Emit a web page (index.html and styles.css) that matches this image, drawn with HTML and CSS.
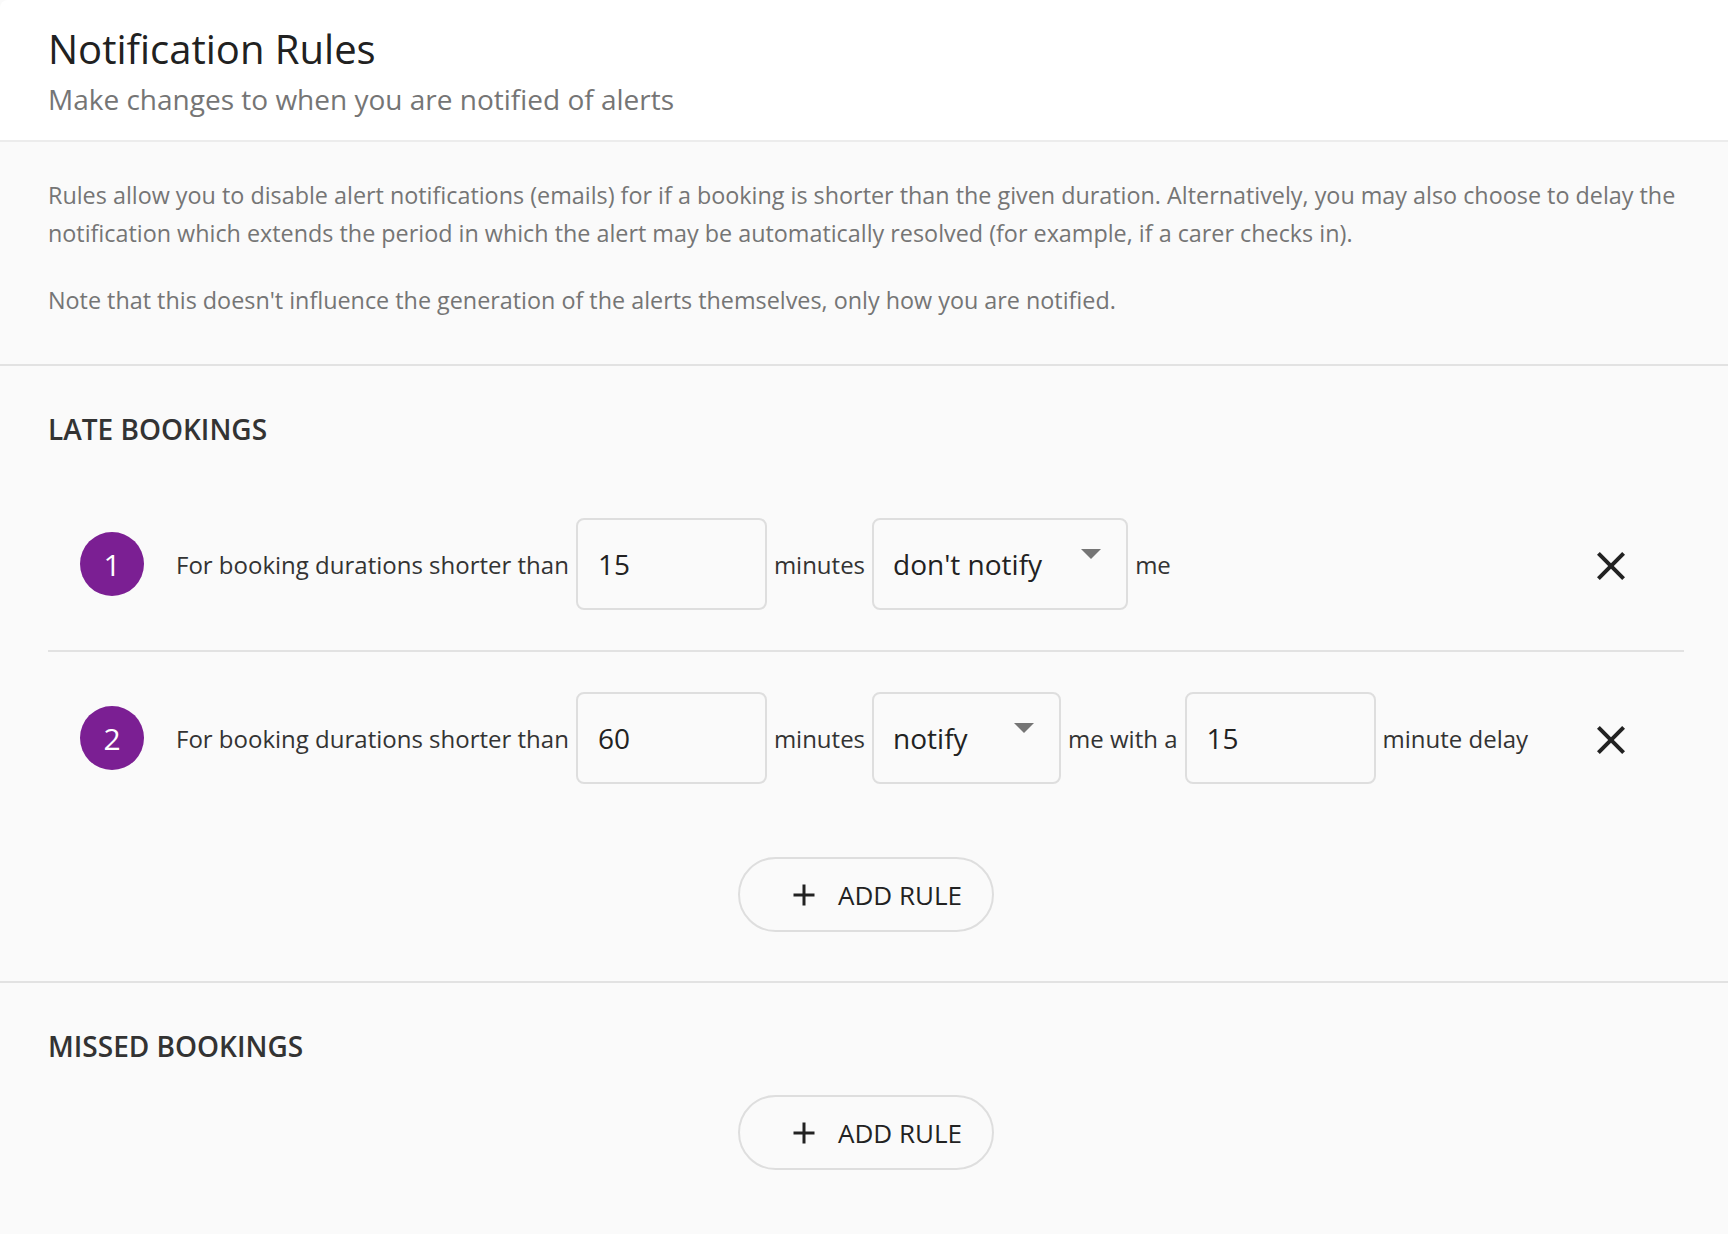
FILE: index.html
```html
<!DOCTYPE html>
<html lang="en">
  <head>
    <meta charset="UTF-8" />
    <meta name="viewport" content="width=device-width, initial-scale=1.0" />
    <title>Notification Rules</title>
    <link rel="stylesheet" href="styles.css">
  </head>
  <body>
    <div class="card">
      <div class="page-header">
        <h1 class="page-title">Notification Rules</h1>
        <p class="page-subtitle">Make changes to when you are notified of alerts</p>
      </div>

      <div class="intro">
        <p>Rules allow you to disable alert notifications (emails) for if a booking is shorter than the given duration. Alternatively, you may also choose to delay the notification which extends the period in which the alert may be automatically resolved (for example, if a carer checks in).</p>
        <p>Note that this doesn't influence the generation of the alerts themselves, only how you are notified.</p>
      </div>

      <div class="section">
        <h2 class="section-title">Late Bookings</h2>

        <div class="rules">
          <div class="rule">
            <div class="rule-number">1</div>
            <span class="rule-text">For booking durations shorter than</span>
            <input class="rule-input" type="text" value="15" />
            <span class="rule-text">minutes</span>
            <div class="rule-select"><span>don't notify</span></div>
            <span class="rule-text">me</span>
            <button class="remove-btn" title="Remove rule">
              <svg viewBox="0 0 24 24" width="48" height="48"><path d="M19 6.41L17.59 5 12 10.59 6.41 5 5 6.41 10.59 12 5 17.59 6.41 19 12 13.41 17.59 19 19 17.59 13.41 12z"/></svg>
            </button>
          </div>

          <div class="rule">
            <div class="rule-number">2</div>
            <span class="rule-text">For booking durations shorter than</span>
            <input class="rule-input" type="text" value="60" />
            <span class="rule-text">minutes</span>
            <div class="rule-select"><span>notify</span></div>
            <span class="rule-text">me with a</span>
            <input class="rule-input" type="text" value="15" />
            <span class="rule-text">minute delay</span>
            <button class="remove-btn" title="Remove rule">
              <svg viewBox="0 0 24 24" width="48" height="48"><path d="M19 6.41L17.59 5 12 10.59 6.41 5 5 6.41 10.59 12 5 17.59 6.41 19 12 13.41 17.59 19 19 17.59 13.41 12z"/></svg>
            </button>
          </div>
        </div>

        <div class="add-row">
          <button class="add-btn">
            <svg viewBox="0 0 24 24" width="36" height="36"><path d="M19 13h-6v6h-2v-6H5v-2h6V5h2v6h6v2z"/></svg>
            Add Rule
          </button>
        </div>
      </div>

      <div class="section">
        <h2 class="section-title">Missed Bookings</h2>

        <div class="add-row">
          <button class="add-btn">
            <svg viewBox="0 0 24 24" width="36" height="36"><path d="M19 13h-6v6h-2v-6H5v-2h6V5h2v6h6v2z"/></svg>
            Add Rule
          </button>
        </div>
      </div>
    </div>
  </body>
</html>
```

FILE: styles.css
```css
* {
  margin: 0;
  padding: 0;
  box-sizing: border-box;
}

body {
  font-family: "Open Sans", "Noto Sans", sans-serif;
  background-color: #fafafa;
  color: #333;
}

.card {
  min-height: 100vh;
  background-color: #fafafa;
  border-radius: 8px 0 0 8px;
  overflow: hidden;
}

/* Header */
.page-header {
  background-color: #fff;
  padding: 23px 48px 23px;
  border-bottom: 2px solid #ececec;
}

.page-title {
  font-size: 40px;
  line-height: 52px;
  font-weight: 400;
  color: #212121;
}

.page-subtitle {
  margin-top: 6px;
  font-size: 28px;
  line-height: 36px;
  color: #757575;
}

/* Intro text */
.intro {
  padding: 34px 44px 16px 48px;
  border-bottom: 2px solid #e2e2e2;
}

.intro p {
  font-size: 23.35px;
  line-height: 38px;
  color: #757575;
  margin-bottom: 29px;
}

/* Sections */
.section {
  padding: 45px 44px 49px 48px;
  border-bottom: 2px solid #e2e2e2;
}

.section:last-child {
  border-bottom: none;
}

.section-title {
  font-size: 28px;
  line-height: 36px;
  font-weight: 600;
  text-transform: uppercase;
  color: #333;
  margin-bottom: 31px;
}

.rules {
  margin-bottom: 33px;
}

.rule {
  display: flex;
  align-items: center;
  gap: 6px;
  padding: 40px 49px 40px 32px;
  border-bottom: 2px solid #e2e2e2;
}

.rule:last-child {
  border-bottom: none;
}

.rule-number {
  flex: none;
  width: 64px;
  height: 64px;
  border-radius: 50%;
  background-color: #7b1f93;
  color: #fff;
  font-size: 30px;
  display: flex;
  justify-content: center;
  align-items: center;
  margin-right: 25px;
}

.rule-text {
  font-size: 24px;
  color: #333;
  white-space: nowrap;
  margin: 0 1px;
}

.rule-input {
  width: 191px;
  height: 92px;
  padding: 0 20px;
  border: 2px solid #dedede;
  border-radius: 8px;
  background-color: transparent;
  font-family: inherit;
  font-size: 28px;
  color: #222;
}

.rule-input:focus {
  outline: none;
  border-color: #7b1f93;
}

.rule-select {
  position: relative;
  min-width: 189px;
  height: 92px;
  padding: 0 84px 0 19px;
  border: 2px solid #dedede;
  border-radius: 8px;
  display: flex;
  align-items: center;
  font-size: 28px;
  color: #222;
  white-space: nowrap;
  cursor: pointer;
}

.rule-select::after {
  content: "";
  position: absolute;
  top: 29px;
  right: 25px;
  border-left: 10px solid transparent;
  border-right: 10px solid transparent;
  border-top: 10px solid #757575;
}

.remove-btn {
  margin-left: auto;
  margin-top: 4px;
  background: none;
  border: none;
  cursor: pointer;
  display: flex;
}

.remove-btn svg {
  fill: #222;
}

/* Add rule button */
.add-row {
  display: flex;
  justify-content: center;
}

.add-btn {
  display: flex;
  align-items: center;
  height: 75px;
  padding: 0 30px 0 46px;
  border: 2px solid #dedede;
  border-radius: 38px;
  background: transparent;
  font-family: inherit;
  font-size: 26px;
  text-transform: uppercase;
  color: #222;
  cursor: pointer;
}

.add-btn svg {
  fill: #222;
  margin-right: 16px;
}
```
